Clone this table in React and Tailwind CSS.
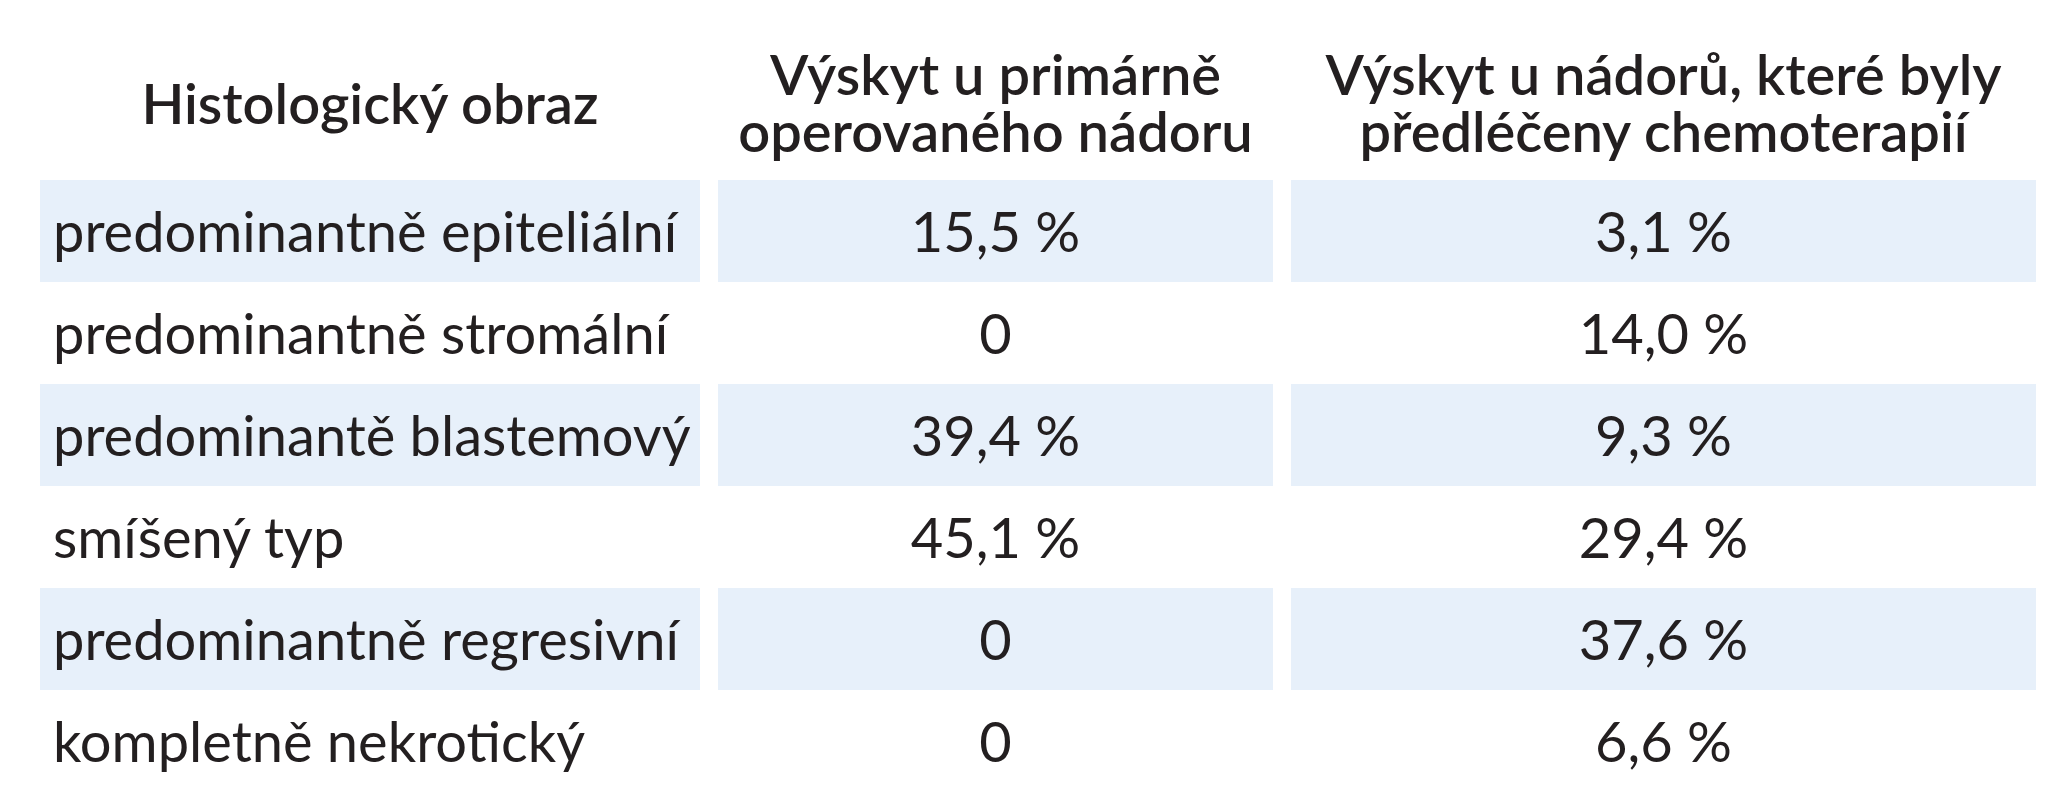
const rows = [
  ['predominantně epiteliální', '15,5 %', '3,1 %'],
  ['predominantně stromální', '0', '14,0 %'],
  ['predominantě blastemový', '39,4 %', '9,3 %'],
  ['smíšený typ', '45,1 %', '29,4 %'],
  ['predominantně regresivní', '0', '37,6 %'],
  ['kompletně nekrotický', '0', '6,6 %'],
]

export default function App() {
  return (
    <div className="w-[2046px] h-[800px] bg-white text-[#231f20] font-['Lato',sans-serif] pl-[40px]">
      <div className="grid grid-cols-[660px_555px_745px] gap-x-[18px]">
        {/* header */}
        <div className="h-[180px] flex items-center justify-center pt-[24px] text-[56px] leading-[57px] font-semibold text-center">
          Histologický obraz
        </div>
        <div className="h-[180px] flex flex-col items-center justify-center pt-[24px] text-[56px] leading-[57px] font-semibold text-center">
          <span>Výskyt u primárně</span>
          <span>operovaného nádoru</span>
        </div>
        <div className="h-[180px] flex flex-col items-center justify-center pt-[24px] text-[56px] leading-[57px] font-semibold text-center">
          <span>Výskyt u nádorů, které byly</span>
          <span>předléčeny chemoterapií</span>
        </div>

        {rows.map((r, i) => {
          const bg = i % 2 === 0 ? 'bg-[#e7f0fa]' : 'bg-white'
          return [
            <div key={i + 'a'} className={`h-[102px] flex items-center pl-[13px] text-[56px] ${bg}`}>{r[0]}</div>,
            <div key={i + 'b'} className={`h-[102px] flex items-center justify-center text-[56px] ${bg}`}>{r[1]}</div>,
            <div key={i + 'c'} className={`h-[102px] flex items-center justify-center text-[56px] ${bg}`}>{r[2]}</div>,
          ]
        })}
      </div>
    </div>
  )
}
